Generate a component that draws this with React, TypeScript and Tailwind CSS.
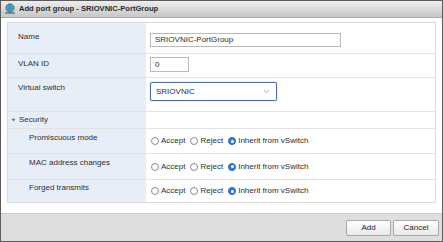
import React from "react";

function Radio({ checked, label }: { checked?: boolean; label: string }) {
  return (
    <span className="flex items-center gap-[2px]">
      {checked ? (
        <span className="w-[8px] h-[8px] rounded-full bg-[#2d7fe0] border border-[#2467bd] flex items-center justify-center">
          <span className="w-[3px] h-[3px] rounded-full bg-white" />
        </span>
      ) : (
        <span className="w-[8px] h-[8px] rounded-full bg-white border border-[#8a8a8a]" />
      )}
      <span>{label}</span>
    </span>
  );
}

function RadioGroup() {
  return (
    <div className="flex items-center gap-[5px] pl-[5px]">
      <Radio label="Accept" />
      <Radio label="Reject" />
      <Radio checked label="Inherit from vSwitch" />
    </div>
  );
}

function NetIcon() {
  return (
    <svg width="12" height="12" viewBox="0 0 12 12">
      <rect x="1" y="9" width="10" height="2" fill="#8c8c8c" />
      <rect x="5.3" y="7" width="1.4" height="3" fill="#6f6f6f" />
      <circle cx="6" cy="5" r="4.2" fill="#3b8fd6" stroke="#2a5f99" strokeWidth="0.6" />
      <path d="M3 3.2 C4 2.4 5 3.6 4.4 4.6 C3.8 5.6 4.8 6.4 3.6 7.4 C2.6 6.4 2.2 4.4 3 3.2Z" fill="#5fb84a" />
      <path d="M6.4 1.6 C7.6 1.6 9 2.6 9.4 4 C8.4 4.4 7.8 3.8 7 4.6 C6.2 3.8 6.8 2.6 6.4 1.6Z" fill="#5fb84a" />
      <path d="M7.2 6 C8 5.6 9 5.8 9.6 6.2 C9.2 7.4 8.2 8.4 7.2 8.6 C7 7.6 6.8 6.8 7.2 6Z" fill="#5fb84a" />
    </svg>
  );
}

export default function App() {
  return (
    <div className="w-[443px] h-[242px] flex flex-col border border-[#5c5c5c] bg-white text-[8px] leading-[10px] text-[#2e2e2e] font-['Liberation_Sans',Arial,sans-serif] overflow-hidden">
      <div className="h-[17px] shrink-0 flex items-center gap-[3px] pl-[3px] bg-gradient-to-b from-[#ededed] to-[#c7c7c7] border-b border-[#a9a9a9]">
        <NetIcon />
        <span className="font-bold text-[7.6px] text-[#2b2b2b]">Add port group - SRIOVNIC-PortGroup</span>
      </div>

      <div className="flex-1 pt-[4px] px-[6px]">
        <div className="border border-[#dadada] flex flex-col">
          <div className="flex h-[31px] border-b border-[#e2e2e2]">
            <div className="w-[138px] shrink-0 bg-[#e7eef7] pl-[10px] pt-[9px]">Name</div>
            <div className="flex-1 pl-[4px] pt-[10px]">
              <div className="w-[191px] h-[14px] border border-[#b9b9b9] flex items-center pl-[4px]">SRIOVNIC-PortGroup</div>
            </div>
          </div>
          <div className="flex h-[24px] border-b border-[#e2e2e2]">
            <div className="w-[138px] shrink-0 bg-[#e7eef7] pl-[10px] pt-[5px]">VLAN ID</div>
            <div className="flex-1 pl-[4px] pt-[3px]">
              <div className="w-[39px] h-[15px] border border-[#b9b9b9] flex items-center pl-[4px]">0</div>
            </div>
          </div>
          <div className="flex h-[34px] border-b border-[#e2e2e2]">
            <div className="w-[138px] shrink-0 bg-[#e7eef7] pl-[10px] pt-[5px]">Virtual switch</div>
            <div className="flex-1 pl-[4px] pt-[4px]">
              <div className="w-[127px] h-[19px] border border-[#4a6c9e] rounded-[2px] flex items-center justify-between pl-[5px] pr-[6px] shadow-[0_0_1px_#4a6c9e]">
                <span>SRIOVNIC</span>
                <svg width="7" height="5" viewBox="0 0 7 5">
                  <path d="M1 1.2 L3.5 3.6 L6 1.2" fill="none" stroke="#9a9a9a" strokeWidth="0.8" />
                </svg>
              </div>
            </div>
          </div>
          <div className="flex h-[17px] border-b border-[#e2e2e2]">
            <div className="w-[138px] shrink-0 bg-[#e7eef7] pl-[3px] flex items-center gap-[3px]">
              <svg width="5" height="4" viewBox="0 0 5 4">
                <path d="M0.5 0.8 L4.5 0.8 L2.5 3.4Z" fill="#6a6a6a" />
              </svg>
              <span>Security</span>
            </div>
            <div className="flex-1" />
          </div>
          <div className="flex h-[25px] border-b border-[#e2e2e2]">
            <div className="w-[138px] shrink-0 bg-[#e7eef7] pl-[21px] pt-[4px]">Promiscuous mode</div>
            <div className="flex-1 flex items-center">
              <RadioGroup />
            </div>
          </div>
          <div className="flex h-[26px] border-b border-[#e2e2e2]">
            <div className="w-[138px] shrink-0 bg-[#e7eef7] pl-[21px] pt-[4px]">MAC address changes</div>
            <div className="flex-1 flex items-center">
              <RadioGroup />
            </div>
          </div>
          <div className="flex h-[22px]">
            <div className="w-[138px] shrink-0 bg-[#e7eef7] pl-[21px] pt-[3px]">Forged transmits</div>
            <div className="flex-1 flex items-center">
              <RadioGroup />
            </div>
          </div>
        </div>
      </div>

      <div className="h-[28px] shrink-0 bg-[#dedede] border-t border-[#cbcbcb] flex items-center justify-end gap-[2px] pr-[3px]">
        <button className="w-[45px] h-[16px] border border-[#a9a9a9] rounded-[2px] bg-gradient-to-b from-white to-[#e9e9e9] text-[8px] text-[#222]">Add</button>
        <button className="w-[46px] h-[16px] border border-[#a9a9a9] rounded-[2px] bg-gradient-to-b from-white to-[#e9e9e9] text-[8px] text-[#222]">Cancel</button>
      </div>
    </div>
  );
}
